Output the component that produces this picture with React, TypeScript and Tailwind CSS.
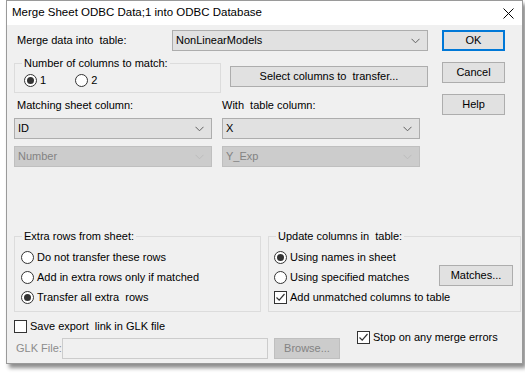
import React from "react"

const font = { fontFamily: '"Liberation Sans", Arial, sans-serif' }

function Chevron({ disabled }: { disabled?: boolean }) {
  return (
    <svg width="9" height="6" viewBox="0 0 9 6" className="shrink-0">
      <path d="M0.5 0.8 L4.5 4.8 L8.5 0.8" fill="none" stroke={disabled ? "#bcbcbc" : "#606060"} strokeWidth="1" />
    </svg>
  )
}

function Combo({ value, width, disabled }: { value: string; width: string; disabled?: boolean }) {
  return (
    <div
      className={`${width} shrink-0 h-[21px] flex items-center justify-between pl-[3px] pr-[7px] border ${
        disabled ? "bg-[#cccccc] border-[#bfbfbf] text-[#838383]" : "bg-[#e1e1e1] border-[#adadad] text-black"
      }`}
    >
      <span>{value}</span>
      <Chevron disabled={disabled} />
    </div>
  )
}

function Btn({ label, width, primary, disabled }: { label: string; width: string; primary?: boolean; disabled?: boolean }) {
  return (
    <div
      className={`${width} shrink-0 h-[21px] flex items-center justify-center whitespace-pre ${
        primary
          ? "border-2 border-[#0078d7] bg-[#e1e1e1]"
          : disabled
          ? "border border-[#bfbfbf] bg-[#cccccc] text-[#838383]"
          : "border border-[#adadad] bg-[#e1e1e1]"
      }`}
    >
      {label}
    </div>
  )
}

function Radio({ checked, label }: { checked?: boolean; label: string }) {
  return (
    <div className="flex items-center gap-[3px] h-[20px] whitespace-pre">
      <div className="w-[13px] h-[13px] rounded-full border border-[#333333] bg-white flex items-center justify-center">
        {checked && <div className="w-[7px] h-[7px] rounded-full bg-[#333333]" />}
      </div>
      <span>{label}</span>
    </div>
  )
}

function Check({ checked, label }: { checked?: boolean; label: string }) {
  return (
    <div className="flex items-center gap-[3px] h-[20px] whitespace-pre">
      <div className="w-[13px] h-[13px] border border-[#333333] bg-white flex items-center justify-center">
        {checked && (
          <svg width="11" height="11" viewBox="0 0 11 11">
            <path d="M1.5 5.5 L4.2 8.2 L9.5 2" fill="none" stroke="#333333" strokeWidth="1.2" />
          </svg>
        )}
      </div>
      <span>{label}</span>
    </div>
  )
}

function Group({ title, className, children }: { title: string; className: string; children: React.ReactNode }) {
  return (
    <div className={`relative shrink-0 border border-[#dcdcdc] ${className}`}>
      <span className="absolute -top-[8px] left-[7px] px-[2px] bg-[#f0f0f0] leading-[14px] whitespace-pre">{title}</span>
      {children}
    </div>
  )
}

export default function App() {
  return (
    <div className="w-[525px] h-[374px] bg-white text-[11px] text-black" style={font}>
      <div className="ml-[6px] w-[517px] h-[364px] flex flex-col border border-[#9a9a9a] shadow-[3px_4px_4px_rgba(0,0,0,0.45)]">
        {/* title bar */}
        <div className="h-[24px] bg-white flex items-center justify-between pl-[5px] pr-[8px] text-[11.5px]">
          <span>Merge Sheet ODBC Data;1 into ODBC Database</span>
          <svg width="11" height="11" viewBox="0 0 11 11">
            <path d="M0.5 0.5 L10.5 10.5 M10.5 0.5 L0.5 10.5" stroke="#000" strokeWidth="1" />
          </svg>
        </div>

        <div className="flex-1 bg-[#f0f0f0] pl-[7px] pt-[5px]">
          {/* top area */}
          <div className="flex gap-[14px]">
            <div className="w-[414px] flex flex-col">
              <div className="h-[21px] flex items-center">
                <span className="w-[158px] pl-[3px] whitespace-pre">Merge data into  table:</span>
                <Combo value="NonLinearModels" width="w-[256px]" />
              </div>

              <div className="mt-[12px] flex items-start gap-[9px]">
                <Group title="Number of columns to match:" className="w-[207px] h-[30px] flex items-center gap-[29px] pl-[9px] pt-[4px]">
                  <Radio checked label="1" />
                  <Radio label="2" />
                </Group>
                <div className="mt-[3px]">
                  <Btn label="Select columns to  transfer..." width="w-[198px]" />
                </div>
              </div>

              <div className="mt-[4px] h-[16px] flex items-center whitespace-pre">
                <span className="w-[208px] pl-[3px]">Matching sheet column:</span>
                <span>With  table column:</span>
              </div>

              <div className="mt-[5px] flex gap-[10px]">
                <Combo value="ID" width="w-[198px]" />
                <Combo value="X" width="w-[198px]" />
              </div>
              <div className="mt-[7px] flex gap-[10px]">
                <Combo value="Number" width="w-[198px]" disabled />
                <Combo value="Y_Exp" width="w-[198px]" disabled />
              </div>
            </div>

            <div className="flex flex-col gap-[11px]">
              <Btn label="OK" width="w-[63px]" primary />
              <Btn label="Cancel" width="w-[63px]" />
              <Btn label="Help" width="w-[63px]" />
            </div>
          </div>

          {/* bottom area */}
          <div className="mt-[69px] flex gap-[7px]">
            <Group title="Extra rows from sheet:" className="w-[247px] h-[76px] pl-[6px] pt-[10px]">
              <Radio label="Do not transfer these rows" />
              <Radio label="Add in extra rows only if matched" />
              <Radio checked label="Transfer all extra  rows" />
            </Group>
            <Group title="Update columns in  table:" className="w-[253px] h-[76px] pl-[5px] pt-[10px]">
              <div className="flex items-start justify-between pr-[7px]">
                <div>
                  <Radio checked label="Using names in sheet" />
                  <Radio label="Using specified matches" />
                </div>
                <div className="mt-[18px]">
                  <Btn label="Matches..." width="w-[74px]" />
                </div>
              </div>
              <Check checked label="Add unmatched columns to table" />
            </Group>
          </div>

          <div className="mt-[4px] flex">
            <Check label="Save export  link in GLK file" />
          </div>

          <div className="mt-[2px] flex items-center">
            <span className="w-[48px] pl-[2px] text-[#8c8c8c] whitespace-pre">GLK File:</span>
            <div className="w-[206px] h-[21px] shrink-0 bg-[#f0f0f0] border border-[#cccccc]" />
            <div className="ml-[6px]">
              <Btn label="Browse..." width="w-[66px]" disabled />
            </div>
            <div className="ml-[17px] -mt-[23px]">
              <Check checked label="Stop on any merge errors" />
            </div>
          </div>
        </div>
      </div>
    </div>
  )
}
